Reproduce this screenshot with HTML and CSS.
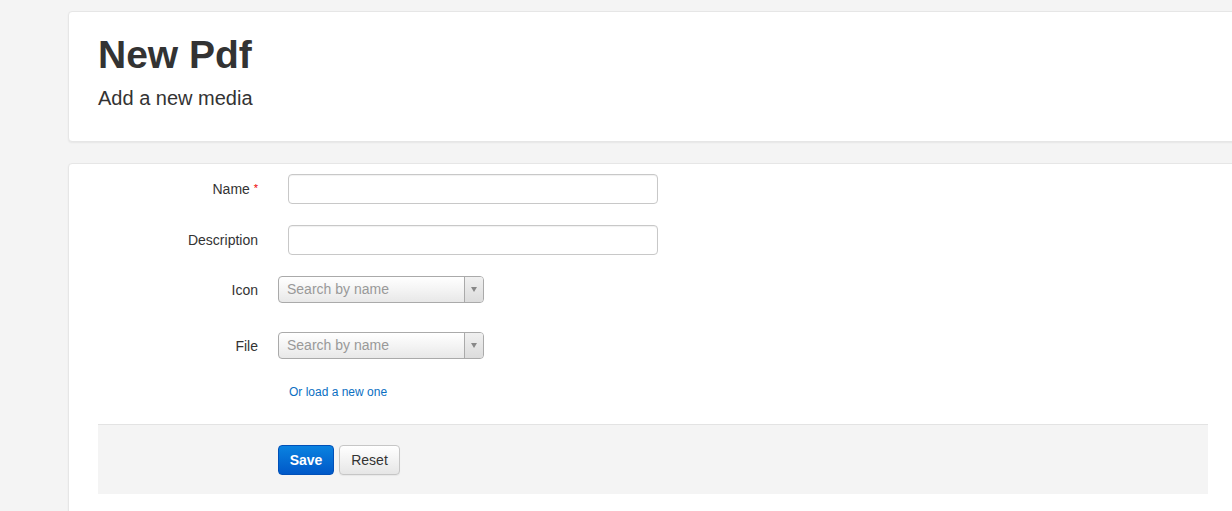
FILE: index.html
```html
<!DOCTYPE html>
<html>
<head>
<meta charset="utf-8">
<link rel="stylesheet" href="styles.css">
</head>
<body>
<div class="page">
  <section class="card header-card">
    <h1 class="title">New Pdf</h1>
    <p class="subtitle">Add a new media</p>
  </section>
  <section class="card form-card">
    <form class="form">
      <div class="row row-text">
        <label class="label">Name <span class="req">*</span></label>
        <input class="text-input" type="text">
      </div>
      <div class="row row-text">
        <label class="label">Description</label>
        <input class="text-input" type="text">
      </div>
      <div class="row row-select">
        <label class="label">Icon</label>
        <div class="select">
          <span class="select-text">Search by name</span>
          <span class="select-arrow"><span class="tri"></span></span>
        </div>
      </div>
      <div class="row row-select row-file">
        <label class="label">File</label>
        <div class="select">
          <span class="select-text">Search by name</span>
          <span class="select-arrow"><span class="tri"></span></span>
        </div>
      </div>
      <div class="row row-link">
        <span class="label"></span>
        <a class="link" href="#">Or load a new one</a>
      </div>
      <div class="actions">
        <span class="label"></span>
        <button type="button" class="btn btn-primary">Save</button>
        <button type="button" class="btn btn-default">Reset</button>
      </div>
    </form>
  </section>
</div>
</body>
</html>
```
FILE: styles.css
```css
html, body {
  margin: 0;
  padding: 0;
  background: #f4f4f4;
  overflow: hidden;
  height: 511px;
}
body {
  font-family: "Liberation Sans", Arial, Helvetica, sans-serif;
  color: #333;
}
.page {
  padding: 11px 0 0 68px;
  width: 1170px;
}
.card {
  background: #fff;
  border: 1px solid #e6e6e6;
  border-radius: 4px;
  box-shadow: 0 1px 2px rgba(0,0,0,0.06);
  box-sizing: border-box;
}
.header-card {
  height: 131px;
  padding: 21px 29px 0 29px;
}
.title {
  margin: 0;
  font-size: 39px;
  font-weight: bold;
  line-height: 44px;
  color: #333;
}
.subtitle {
  margin: 9px 0 0 0;
  font-size: 20px;
  line-height: 24px;
  color: #333;
  font-weight: normal;
}
.form-card {
  margin-top: 21px;
  height: 360px;
  padding: 10px 29px 0 29px;
}
.form {
  margin: 0;
}
.row {
  display: flex;
  align-items: center;
}
.label {
  width: 160px;
  flex: 0 0 160px;
  text-align: right;
  font-size: 14px;
  color: #333;
  margin-right: 20px;
}
.req {
  color: #e00;
  font-size: 11px;
  vertical-align: 2px;
}
.row-text {
  height: 30px;
  margin-bottom: 21px;
}
.text-input {
  margin: 0 0 0 10px;
  width: 370px;
  height: 30px;
  box-sizing: border-box;
  border: 1px solid #c8c8c8;
  border-radius: 4px;
  background: #fff;
  box-shadow: inset 0 1px 1px rgba(0,0,0,0.06);
  padding: 4px 6px;
  font-family: inherit;
  font-size: 14px;
}
.row-select {
  height: 27px;
  margin-bottom: 29px;
}
.row-file {
  margin-bottom: 26px;
}
.select {
  display: flex;
  width: 206px;
  height: 27px;
  box-sizing: border-box;
  border: 1px solid #aaa;
  border-radius: 4px;
  background: linear-gradient(#ffffff 0%, #f4f4f4 50%, #e8e8e8 100%);
  overflow: hidden;
}
.select-text {
  flex: 1;
  font-size: 14px;
  color: #999;
  line-height: 25px;
  padding-left: 8px;
}
.select-arrow {
  width: 18px;
  border-left: 1px solid #aaa;
  background: linear-gradient(#f0f0f0, #dcdcdc);
  display: flex;
  align-items: center;
  justify-content: center;
}
.tri {
  width: 0;
  height: 0;
  border-left: 3px solid transparent;
  border-right: 3px solid transparent;
  border-top: 5px solid #888;
}
.row-link {
  height: 14px;
  margin-bottom: 25px;
}
.link {
  margin-left: 11px;
  font-size: 12px;
  color: #0b6fc2;
  text-decoration: none;
  line-height: 14px;
}
.actions {
  display: flex;
  align-items: center;
  height: 70px;
  box-sizing: border-box;
  border-top: 1px solid #e3e3e3;
  background: #f4f4f4;
}
.btn {
  height: 30px;
  box-sizing: border-box;
  border-radius: 4px;
  font-family: inherit;
  font-size: 14px;
  padding: 0 10px;
  margin: 0 5px 0 0;
  cursor: pointer;
}
.btn-primary {
  width: 56px;
  color: #fff;
  font-weight: bold;
  border: 1px solid #0050b8;
  background: linear-gradient(#0a82e0, #0058c8);
}
.btn-default {
  width: 61px;
  color: #333;
  border: 1px solid #c6c6c6;
  background: linear-gradient(#ffffff, #e6e6e6);
  box-shadow: 0 1px 1px rgba(0,0,0,0.05);
}
```
